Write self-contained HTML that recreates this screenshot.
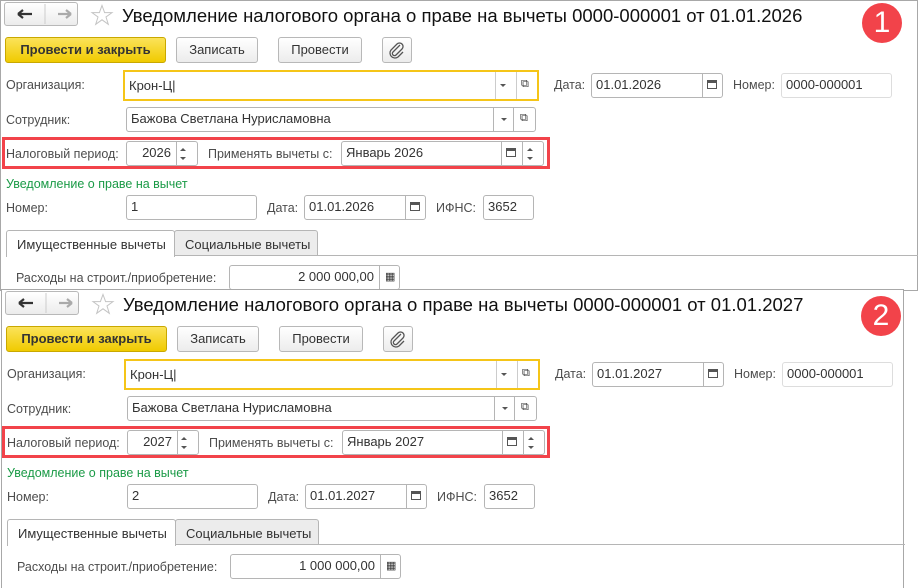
<!DOCTYPE html><html><head><meta charset="utf-8"><style>
*{box-sizing:border-box}body{margin:0;width:919px;height:588px;background:#fff;font-family:"Liberation Sans",Arial,sans-serif;font-size:12.5px;color:#4d4d4d;position:relative;overflow:hidden}
.p{position:absolute;background:#fff;border:1px solid #a8a8a8}
.a{position:absolute;white-space:nowrap}
.f{position:absolute;border:1px solid #b5b5b5;border-radius:3px;background:#fff;color:#333;font-size:13px;padding:0 4px;line-height:22px;white-space:nowrap}
.sep{position:absolute;top:0;bottom:0;border-left:1px solid #b5b5b5}
.btn{position:absolute;border:1px solid #b8b8b8;border-radius:3px;background:linear-gradient(#fff,#ececec);text-align:center;line-height:24px;color:#333;font-size:13px}
.tri{position:absolute;width:0;height:0;border-left:3px solid transparent;border-right:3px solid transparent;border-top:3px solid #555}
.cal{position:absolute;width:10px;height:9px;border:1px solid #555;border-top-width:3px}
.red{position:absolute;border:3px solid #f2434a}
.badge{position:absolute;width:40px;height:40px;border-radius:50%;background:#f2434a;color:#fff;font-size:30px;text-align:center;line-height:40px}
.sp{position:absolute;font-size:8px;line-height:8px}
</style></head><body>

<!-- PANEL 1 -->
<div class="p" style="left:0;top:0;width:918px;height:291px">
<div class="btn" style="left:3px;top:1px;width:74px;height:24px"><svg width="74" height="24" style="position:absolute;left:-1px;top:-1px"><path d="M14 12H28M14 12L19 8M14 12L19 16" stroke="#333" stroke-width="2.2" fill="none"/><line x1="41" y1="2" x2="41" y2="22" stroke="#ccc"/><path d="M54 12H67M67 12L62 8M67 12L62 16" stroke="#aaa" stroke-width="2.2" fill="none"/></svg></div>
<svg class="a" style="left:89px;top:3px" width="24" height="22"><path d="M12 1.5L14.6 8.6H22L16 13L18.3 20.3L12 15.8L5.7 20.3L8 13L2 8.6H9.4Z" fill="none" stroke="#c4c4c4" stroke-width="1"/></svg>
<div class="a" style="left:121px;top:4px;font-size:18.5px;color:#111">Уведомление налогового органа о праве на вычеты 0000-000001 от 01.01.2026</div>
<div class="badge" style="left:861px;top:2px">1</div>
<div class="btn" style="left:4px;top:36px;width:161px;height:26px;background:linear-gradient(#fbe35a,#f0cb00);border-color:#c9a800;font-weight:bold;color:#333">Провести и закрыть</div>
<div class="btn" style="left:175px;top:36px;width:82px;height:26px">Записать</div>
<div class="btn" style="left:277px;top:36px;width:84px;height:26px">Провести</div>
<div class="btn" style="left:381px;top:36px;width:30px;height:26px"><svg width="28" height="24" style="position:absolute;left:0;top:0"><path d="M17 7L10 14A2 2 0 0 0 13 17L19 11A3.5 3.5 0 0 0 14 6L8 12A5 5 0 0 0 15 19L20 14" fill="none" stroke="#555" stroke-width="1.3"/></svg></div>
<div class="a" style="left:5px;top:77px">Организация:</div>
<div class="f" style="left:122px;top:69px;width:416px;height:31px;border:2px solid #f5c518;border-radius:0;line-height:27px">Крон-Ц|<span class="sep" style="left:370px;border-color:#ccc"></span><span class="tri" style="left:375px;top:12px"></span><span class="sep" style="left:391px;border-color:#ccc"></span><span class="a" style="left:396px;top:-1px;font-size:11px">⧉</span></div>
<div class="a" style="left:553px;top:77px">Дата:</div>
<div class="f" style="left:590px;top:72px;width:132px;height:25px">01.01.2026<span class="sep" style="left:110px"></span><span class="cal" style="left:115px;top:6px"></span></div>
<div class="a" style="left:732px;top:77px">Номер:</div>
<div class="f" style="left:780px;top:72px;width:111px;height:25px;border-color:#ddd">0000-000001</div>
<div class="a" style="left:5px;top:112px">Сотрудник:</div>
<div class="f" style="left:125px;top:106px;width:410px;height:25px">Бажова Светлана Нурисламовна<span class="sep" style="left:366px"></span><span class="tri" style="left:374px;top:10px"></span><span class="sep" style="left:386px"></span><span class="a" style="left:393px;top:-1px;font-size:11px">⧉</span></div>
<div class="red" style="left:1px;top:136px;width:548px;height:32px"></div>
<div class="a" style="left:5px;top:146px">Налоговый период:</div>
<div class="f" style="left:125px;top:140px;width:72px;height:25px;text-align:right;padding-right:26px">2026<span class="sep" style="left:49px"></span><span class="tri" style="left:53px;top:6px;transform:rotate(180deg)"></span><span class="tri" style="left:53px;top:15px"></span></div>
<div class="a" style="left:207px;top:146px">Применять вычеты с:</div>
<div class="f" style="left:340px;top:140px;width:203px;height:25px">Январь 2026<span class="sep" style="left:159px"></span><span class="cal" style="left:164px;top:6px"></span><span class="sep" style="left:180px"></span><span class="tri" style="left:185px;top:6px;transform:rotate(180deg)"></span><span class="tri" style="left:185px;top:15px"></span></div>
<div class="a" style="left:5px;top:176px;color:#1a9a46">Уведомление о праве на вычет</div>
<div class="a" style="left:5px;top:200px">Номер:</div>
<div class="f" style="left:125px;top:194px;width:131px;height:25px">1</div>
<div class="a" style="left:266px;top:200px">Дата:</div>
<div class="f" style="left:303px;top:194px;width:122px;height:25px">01.01.2026<span class="sep" style="left:100px"></span><span class="cal" style="left:105px;top:6px"></span></div>
<div class="a" style="left:435px;top:200px">ИФНС:</div>
<div class="f" style="left:482px;top:194px;width:51px;height:25px">3652</div>
<div class="a" style="left:5px;top:254px;width:912px;border-top:1px solid #b5b5b5"></div>
<div class="a" style="left:5px;top:229px;width:169px;height:27px;border:1px solid #b5b5b5;border-bottom:none;background:#fff;border-radius:3px 3px 0 0;padding:6px 0 0 10px;color:#333;font-size:13px">Имущественные вычеты</div>
<div class="a" style="left:173px;top:229px;width:144px;height:26px;border:1px solid #b5b5b5;background:#ececec;border-radius:3px 3px 0 0;padding:6px 0 0 10px;color:#333;font-size:13px">Социальные вычеты</div>
<div class="a" style="left:15px;top:270px">Расходы на строит./приобретение:</div>
<div class="f" style="left:228px;top:264px;width:171px;height:25px;text-align:right;padding-right:25px">2 000 000,00<span class="sep" style="left:149px"></span><span class="a" style="left:155px;top:0;font-size:11px">▦</span></div>
</div>

<!-- PANEL 2 -->
<div class="p" style="left:1px;top:289px;width:903px;height:299px;border-bottom:none">
<div class="btn" style="left:3px;top:1px;width:74px;height:24px"><svg width="74" height="24" style="position:absolute;left:-1px;top:-1px"><path d="M14 12H28M14 12L19 8M14 12L19 16" stroke="#333" stroke-width="2.2" fill="none"/><line x1="41" y1="2" x2="41" y2="22" stroke="#ccc"/><path d="M54 12H67M67 12L62 8M67 12L62 16" stroke="#aaa" stroke-width="2.2" fill="none"/></svg></div>
<svg class="a" style="left:89px;top:3px" width="24" height="22"><path d="M12 1.5L14.6 8.6H22L16 13L18.3 20.3L12 15.8L5.7 20.3L8 13L2 8.6H9.4Z" fill="none" stroke="#c4c4c4" stroke-width="1"/></svg>
<div class="a" style="left:121px;top:4px;font-size:18.5px;color:#111">Уведомление налогового органа о праве на вычеты 0000-000001 от 01.01.2027</div>
<div class="badge" style="left:859px;top:6px">2</div>
<div class="btn" style="left:4px;top:36px;width:161px;height:26px;background:linear-gradient(#fbe35a,#f0cb00);border-color:#c9a800;font-weight:bold;color:#333">Провести и закрыть</div>
<div class="btn" style="left:175px;top:36px;width:82px;height:26px">Записать</div>
<div class="btn" style="left:277px;top:36px;width:84px;height:26px">Провести</div>
<div class="btn" style="left:381px;top:36px;width:30px;height:26px"><svg width="28" height="24" style="position:absolute;left:0;top:0"><path d="M17 7L10 14A2 2 0 0 0 13 17L19 11A3.5 3.5 0 0 0 14 6L8 12A5 5 0 0 0 15 19L20 14" fill="none" stroke="#555" stroke-width="1.3"/></svg></div>
<div class="a" style="left:5px;top:77px">Организация:</div>
<div class="f" style="left:122px;top:69px;width:416px;height:31px;border:2px solid #f5c518;border-radius:0;line-height:27px">Крон-Ц|<span class="sep" style="left:370px;border-color:#ccc"></span><span class="tri" style="left:375px;top:12px"></span><span class="sep" style="left:391px;border-color:#ccc"></span><span class="a" style="left:396px;top:-1px;font-size:11px">⧉</span></div>
<div class="a" style="left:553px;top:77px">Дата:</div>
<div class="f" style="left:590px;top:72px;width:132px;height:25px">01.01.2027<span class="sep" style="left:110px"></span><span class="cal" style="left:115px;top:6px"></span></div>
<div class="a" style="left:732px;top:77px">Номер:</div>
<div class="f" style="left:780px;top:72px;width:111px;height:25px;border-color:#ddd">0000-000001</div>
<div class="a" style="left:5px;top:112px">Сотрудник:</div>
<div class="f" style="left:125px;top:106px;width:410px;height:25px">Бажова Светлана Нурисламовна<span class="sep" style="left:366px"></span><span class="tri" style="left:374px;top:10px"></span><span class="sep" style="left:386px"></span><span class="a" style="left:393px;top:-1px;font-size:11px">⧉</span></div>
<div class="red" style="left:0px;top:136px;width:548px;height:32px"></div>
<div class="a" style="left:5px;top:146px">Налоговый период:</div>
<div class="f" style="left:125px;top:140px;width:72px;height:25px;text-align:right;padding-right:26px">2027<span class="sep" style="left:49px"></span><span class="tri" style="left:53px;top:6px;transform:rotate(180deg)"></span><span class="tri" style="left:53px;top:15px"></span></div>
<div class="a" style="left:207px;top:146px">Применять вычеты с:</div>
<div class="f" style="left:340px;top:140px;width:203px;height:25px">Январь 2027<span class="sep" style="left:159px"></span><span class="cal" style="left:164px;top:6px"></span><span class="sep" style="left:180px"></span><span class="tri" style="left:185px;top:6px;transform:rotate(180deg)"></span><span class="tri" style="left:185px;top:15px"></span></div>
<div class="a" style="left:5px;top:176px;color:#1a9a46">Уведомление о праве на вычет</div>
<div class="a" style="left:5px;top:200px">Номер:</div>
<div class="f" style="left:125px;top:194px;width:131px;height:25px">2</div>
<div class="a" style="left:266px;top:200px">Дата:</div>
<div class="f" style="left:303px;top:194px;width:122px;height:25px">01.01.2027<span class="sep" style="left:100px"></span><span class="cal" style="left:105px;top:6px"></span></div>
<div class="a" style="left:435px;top:200px">ИФНС:</div>
<div class="f" style="left:482px;top:194px;width:51px;height:25px">3652</div>
<div class="a" style="left:5px;top:254px;width:898px;border-top:1px solid #b5b5b5"></div>
<div class="a" style="left:5px;top:229px;width:169px;height:27px;border:1px solid #b5b5b5;border-bottom:none;background:#fff;border-radius:3px 3px 0 0;padding:6px 0 0 10px;color:#333;font-size:13px">Имущественные вычеты</div>
<div class="a" style="left:173px;top:229px;width:144px;height:26px;border:1px solid #b5b5b5;background:#ececec;border-radius:3px 3px 0 0;padding:6px 0 0 10px;color:#333;font-size:13px">Социальные вычеты</div>
<div class="a" style="left:15px;top:270px">Расходы на строит./приобретение:</div>
<div class="f" style="left:228px;top:264px;width:171px;height:25px;text-align:right;padding-right:25px">1 000 000,00<span class="sep" style="left:149px"></span><span class="a" style="left:155px;top:0;font-size:11px">▦</span></div>
</div>
</body></html>
